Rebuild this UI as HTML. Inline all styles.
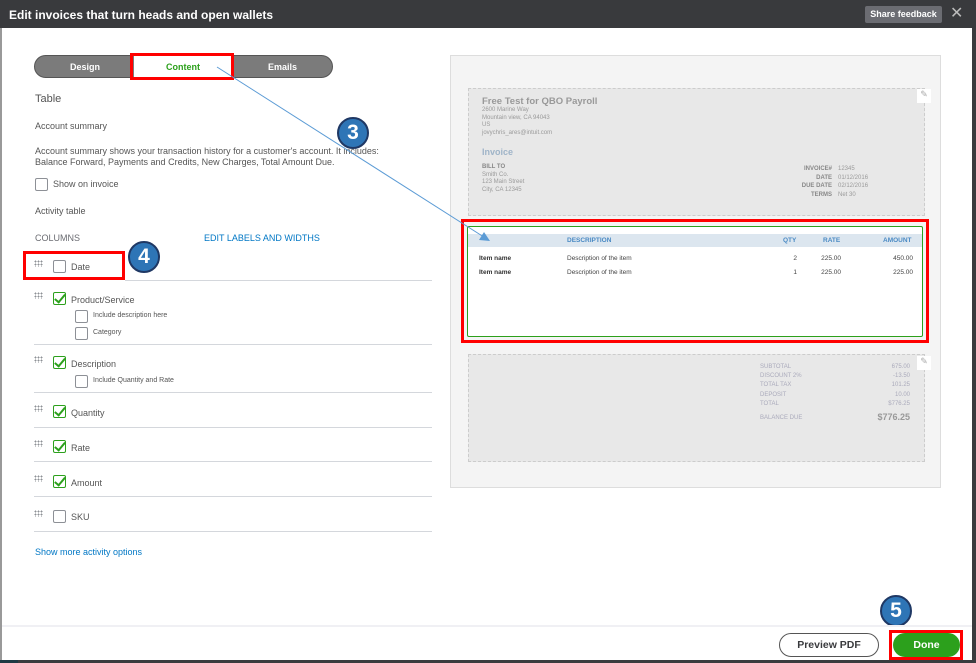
<!DOCTYPE html>
<html><head><meta charset="utf-8"><style>
*{box-sizing:border-box;margin:0;padding:0}
body{width:976px;height:663px;position:relative;overflow:hidden;background:#fff;font-family:"Liberation Sans",sans-serif;color:#393a3d}
.a{position:absolute}
.hdr{left:0;top:0;width:976px;height:28px;background:#393a3d;color:#fff;font-size:12px;font-weight:bold;padding:8px 9px}
.t{font-size:9px;color:#555}
.cb{position:absolute;width:13px;height:13px;border:1px solid #8d9096;border-radius:2px;background:#fff}
.ck{border-color:#2ca01c}
.ck:after{content:"";position:absolute;left:3px;top:-1px;width:4px;height:9px;border:solid #2ca01c;border-width:0 2px 2px 0;transform:rotate(40deg)}
.sep{position:absolute;left:34px;width:398px;height:1px;background:#d4d7dc}
.grip{position:absolute;width:9px;height:7px;background-image:radial-gradient(circle,#8d9096 0.8px,transparent 1px);background-size:3px 3px}
.circ{position:absolute;width:32px;height:32px;border-radius:50%;background:#2e75b6;border:2px solid #1f3864;color:#fff;font-weight:bold;font-size:21px;text-align:center;line-height:28px}
.red{position:absolute;border:3px solid #f00}
.g{color:#9a9a9a;font-size:6px;line-height:7.5px}
.r{text-align:right}
</style></head><body>
<div class="a hdr">Edit invoices that turn heads and open wallets</div>
<div class="a" style="left:865px;top:6px;width:77px;height:17px;background:#6b6c72;border-radius:2px;color:#fff;font-size:9px;font-weight:bold;text-align:center;line-height:17px">Share feedback</div>
<div class="a" style="left:950px;top:3px;color:#bbb;font-size:16px">✕</div>
<div class="a" style="left:972px;top:28px;width:4px;height:635px;background:#3a3b3e"></div>
<div class="a" style="left:0;top:28px;width:2px;height:635px;background:#999"></div>
<div class="a" style="left:0;top:660px;width:976px;height:3px;background:#3a3b3e"></div>
<div class="a" style="left:0;top:660px;width:18px;height:3px;background:#1e3a44"></div>

<div class="a" style="left:34px;top:55px;width:299px;height:23px;background:#7b7b7b;border:1px solid #555;border-radius:12px"></div>
<div class="a" style="left:134px;top:56px;width:99px;height:21px;background:#fff"></div>
<div class="a" style="left:70px;top:62px;font-size:9px;color:#fff;font-weight:bold">Design</div>
<div class="a" style="left:166px;top:62px;font-size:9px;color:#2ca01c;font-weight:bold">Content</div>
<div class="a" style="left:268px;top:62px;font-size:9px;color:#fff;font-weight:bold">Emails</div>
<div class="red" style="left:130px;top:53px;width:104px;height:27px"></div>

<div class="a" style="left:35px;top:93px;font-size:11px;color:#555">Table</div>
<div class="a t" style="left:35px;top:121px">Account summary</div>
<div class="a t" style="left:35px;top:146px;line-height:11px">Account summary shows your transaction history for a customer's account. It includes:<br>Balance Forward, Payments and Credits, New Charges, Total Amount Due.</div>
<div class="cb" style="left:35px;top:178px"></div>
<div class="a t" style="left:53px;top:179px">Show on invoice</div>
<div class="a t" style="left:35px;top:206px">Activity table</div>
<div class="a t" style="left:35px;top:233px;color:#6b6c72">COLUMNS</div>
<div class="a t" style="left:204px;top:233px;color:#0077c5">EDIT LABELS AND WIDTHS</div>

<div class="grip" style="left:34px;top:260px"></div>
<div class="cb" style="left:53px;top:260px"></div>
<div class="a t" style="left:71px;top:262px">Date</div>
<div class="red" style="left:23px;top:251px;width:102px;height:29px"></div>
<div class="sep" style="left:125px;width:307px;top:280px"></div>

<div class="grip" style="left:34px;top:292px"></div>
<div class="cb ck" style="left:53px;top:292px"></div>
<div class="a t" style="left:71px;top:295px">Product/Service</div>
<div class="cb" style="left:75px;top:310px"></div>
<div class="a" style="left:93px;top:312px;font-size:7px;color:#555">Include description here</div>
<div class="cb" style="left:75px;top:327px"></div>
<div class="a" style="left:93px;top:329px;font-size:7px;color:#555">Category</div>
<div class="sep" style="top:344px"></div>

<div class="grip" style="left:34px;top:356px"></div>
<div class="cb ck" style="left:53px;top:356px"></div>
<div class="a t" style="left:71px;top:359px">Description</div>
<div class="cb" style="left:75px;top:375px"></div>
<div class="a" style="left:93px;top:377px;font-size:7px;color:#555">Include Quantity and Rate</div>
<div class="sep" style="top:392px"></div>

<div class="grip" style="left:34px;top:405px"></div>
<div class="cb ck" style="left:53px;top:405px"></div>
<div class="a t" style="left:71px;top:408px">Quantity</div>
<div class="sep" style="top:427px"></div>

<div class="grip" style="left:34px;top:440px"></div>
<div class="cb ck" style="left:53px;top:440px"></div>
<div class="a t" style="left:71px;top:443px">Rate</div>
<div class="sep" style="top:461px"></div>

<div class="grip" style="left:34px;top:475px"></div>
<div class="cb ck" style="left:53px;top:475px"></div>
<div class="a t" style="left:71px;top:478px">Amount</div>
<div class="sep" style="top:496px"></div>

<div class="grip" style="left:34px;top:510px"></div>
<div class="cb" style="left:53px;top:510px"></div>
<div class="a t" style="left:71px;top:512px">SKU</div>
<div class="sep" style="top:531px"></div>
<div class="a t" style="left:35px;top:547px;color:#0077c5">Show more activity options</div>

<div class="a" style="left:450px;top:55px;width:491px;height:433px;background:#f4f4f4;border:1px solid #ddd"></div>
<div class="a" style="left:468px;top:88px;width:457px;height:128px;background:#e8e8e8;border:1px dashed #ccc"></div>
<div class="a" style="left:917px;top:89px;width:14px;height:14px;background:#fff;color:#aaa;font-size:9px;text-align:center">✎</div>
<div class="a" style="left:482px;top:96px;font-size:9.5px;font-weight:bold;color:#999">Free Test for QBO Payroll</div>
<div class="a g" style="left:482px;top:107px">2600 Marine Way<br>Mountain view, CA 94043<br>US<br>jovychris_ares@intuit.com</div>
<div class="a" style="left:482px;top:147px;font-size:9px;font-weight:bold;color:#9fb4c8">Invoice</div>
<div class="a g" style="left:482px;top:164px"><b style="color:#888">BILL TO</b><br>Smith Co.<br>123 Main Street<br>City, CA 12345</div>
<div class="a g r" style="left:780px;top:165px;width:52px;line-height:8.5px"><b style="color:#888">INVOICE#<br>DATE<br>DUE DATE<br>TERMS</b></div>
<div class="a g" style="left:838px;top:165px;line-height:8.5px">12345<br>01/12/2016<br>02/12/2016<br>Net 30</div>

<div class="a" style="left:467px;top:226px;width:456px;height:111px;background:#fff;border:1px solid #2ca01c;border-radius:2px"></div>
<div class="a" style="left:468px;top:234px;width:454px;height:13px;background:#dce6ef"></div>
<div class="a" style="left:567px;top:237px;font-size:6.5px;font-weight:bold;color:#4a8ac4">DESCRIPTION</div>
<div class="a" style="left:783px;top:237px;font-size:6.5px;font-weight:bold;color:#4a8ac4">QTY</div>
<div class="a" style="left:823px;top:237px;font-size:6.5px;font-weight:bold;color:#4a8ac4">RATE</div>
<div class="a" style="left:883px;top:237px;font-size:6.5px;font-weight:bold;color:#4a8ac4">AMOUNT</div>
<div class="a" style="left:479px;top:252px;font-size:6.5px;line-height:13.5px;color:#333;font-weight:bold">Item name<br>Item name</div>
<div class="a" style="left:567px;top:252px;font-size:6.5px;line-height:13.5px;color:#444">Description of the item<br>Description of the item</div>
<div class="a r" style="left:770px;top:252px;width:27px;font-size:6.5px;line-height:13.5px;color:#444">2<br>1</div>
<div class="a r" style="left:810px;top:252px;width:31px;font-size:6.5px;line-height:13.5px;color:#444">225.00<br>225.00</div>
<div class="a r" style="left:870px;top:252px;width:43px;font-size:6.5px;line-height:13.5px;color:#444">450.00<br>225.00</div>
<div class="red" style="left:461px;top:219px;width:468px;height:124px"></div>

<div class="a" style="left:468px;top:354px;width:457px;height:108px;background:#e8e8e8;border:1px dashed #ccc"></div>
<div class="a" style="left:917px;top:356px;width:14px;height:14px;background:#fff;color:#aaa;font-size:9px;text-align:center">✎</div>
<div class="a g" style="left:760px;top:363px;line-height:9.2px;color:#aab">SUBTOTAL<br>DISCOUNT 2%<br>TOTAL TAX<br>DEPOSIT<br>TOTAL</div>
<div class="a g r" style="left:860px;top:363px;width:50px;line-height:9.2px;color:#aab">675.00<br>-13.50<br>101.25<br>10.00<br>$776.25</div>
<div class="a g" style="left:760px;top:415px;color:#aab">BALANCE DUE</div>
<div class="a" style="left:860px;top:412px;width:50px;text-align:right;font-size:9px;font-weight:bold;color:#999">$776.25</div>

<svg class="a" style="left:0;top:0" width="976" height="663"><line x1="217" y1="67" x2="487" y2="239" stroke="#5b9bd5" stroke-width="1"/><polygon points="490,241 479,240 484,232" fill="#5b9bd5"/></svg>

<div class="circ" style="left:337px;top:117px">3</div>
<div class="circ" style="left:128px;top:241px">4</div>
<div class="circ" style="left:880px;top:595px">5</div>

<div class="a" style="left:2px;top:625px;width:970px;height:2px;background:#f0f0f4"></div>
<div class="a" style="left:779px;top:633px;width:100px;height:24px;border:1px solid #555;border-radius:12px;font-size:10.5px;font-weight:bold;text-align:center;line-height:22px;color:#393a3d">Preview PDF</div>
<div class="a" style="left:893px;top:633px;width:67px;height:24px;background:#2ca01c;border-radius:12px;font-size:10.5px;font-weight:bold;text-align:center;line-height:24px;color:#fff">Done</div>
<div class="red" style="left:889px;top:630px;width:74px;height:30px"></div>
</body></html>
